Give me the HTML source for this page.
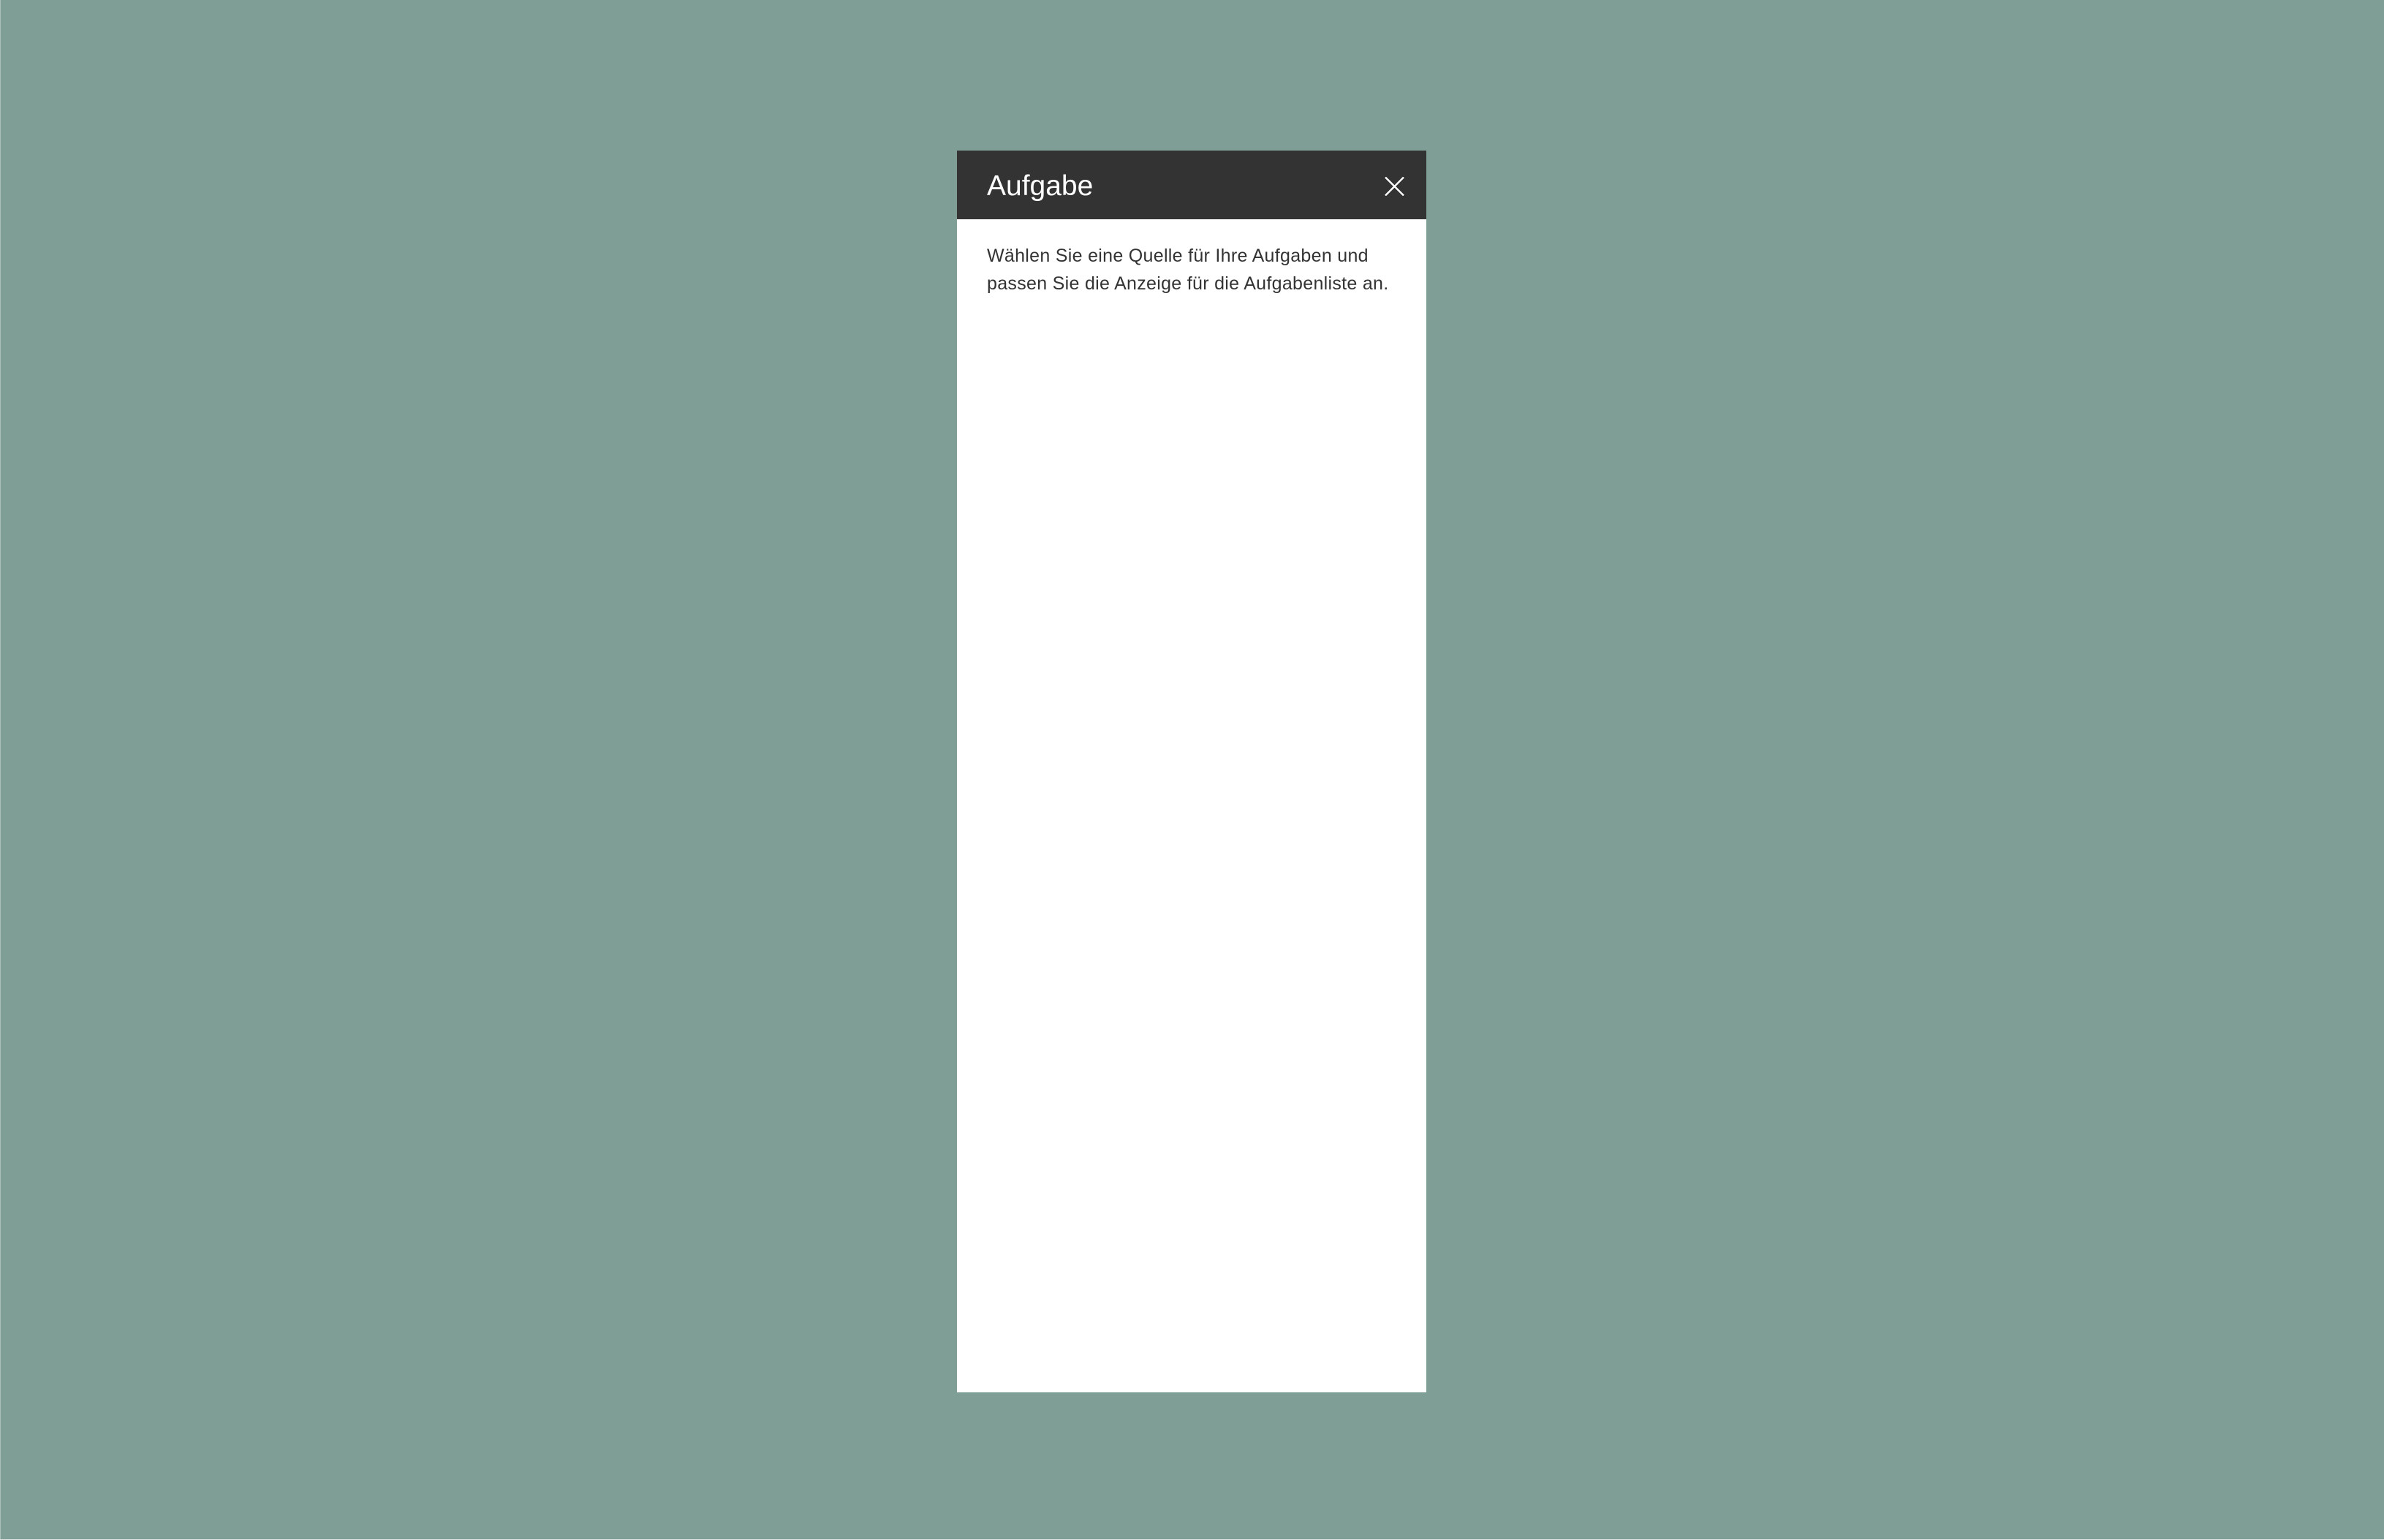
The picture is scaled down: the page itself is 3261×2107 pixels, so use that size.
<!DOCTYPE html>
<html><head><meta charset="utf-8"><style>
html,body{margin:0;padding:0}
body{width:3261px;height:2107px;background:#7f9e95;position:relative;overflow:hidden;font-family:"Liberation Sans",sans-serif}
.panel{position:absolute;left:1309px;top:206px;width:642px;height:1699px;background:#fff}
.hdr{position:absolute;left:0;top:0;width:642px;height:94px;background:#333}
.title{position:absolute;left:41px;top:27px;font-size:39px;color:#fff;line-height:44px;font-weight:300}
.x{position:absolute;left:585px;top:36px}
.body{position:absolute;left:41px;top:125px;font-size:25px;line-height:38px;color:#333;width:600px;white-space:nowrap;letter-spacing:0.3px}
.edgeL{position:absolute;left:0;top:0;width:1px;height:2107px;background:#a9bfb8}
.edgeB{position:absolute;left:0;top:2106px;width:3261px;height:1px;background:#e6e6e6}
</style></head><body>
<div class="edgeL"></div><div class="edgeB"></div>
<div class="panel">
<div class="hdr"><div class="title">Aufgabe</div>
<svg class="x" width="27" height="26" viewBox="0 0 27 26"><path d="M1 0.5L26 25.5M26 0.5L1 25.5" stroke="#fff" stroke-width="2.4"/></svg></div>
<div class="body">Wählen Sie eine Quelle für Ihre Aufgaben und<br>passen Sie die Anzeige für die Aufgabenliste an.</div>
</div>
</body></html>
